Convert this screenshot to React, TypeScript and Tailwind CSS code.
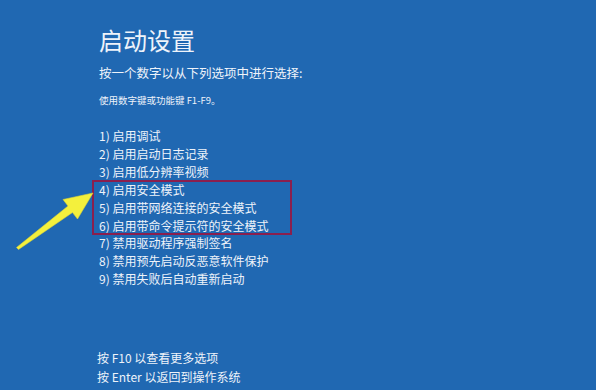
import React from "react";

const items = [
  "1) 启用调试",
  "2) 启用启动日志记录",
  "3) 启用低分辨率视频",
  "4) 启用安全模式",
  "5) 启用带网络连接的安全模式",
  "6) 启用带命令提示符的安全模式",
  "7) 禁用驱动程序强制签名",
  "8) 禁用预先启动反恶意软件保护",
  "9) 禁用失败后自动重新启动",
];

export default function App() {
  const font = { fontFamily: '"Noto Sans CJK SC", "Noto Sans", sans-serif' };
  return (
    <div
      className="relative w-[596px] h-[390px] overflow-hidden bg-[#2068b2] text-[#eef3fa] pl-[99px] pt-[26px] flex flex-col"
      style={font}
    >
      <div className="text-[24px] leading-[28px]">启动设置</div>
      <div className="mt-[10px] text-[12.5px] leading-[18px]">按一个数字以从下列选项中进行选择:</div>
      <div className="mt-[11px] text-[9.5px] leading-[14px]">使用数字键或功能键 F1-F9。</div>
      <div className="mt-[20px] text-[12px] leading-[17.9px] flex flex-col">
        {items.slice(0, 3).map((t) => (
          <div key={t}>{t}</div>
        ))}
        <div className="relative flex flex-col">
          <span className="absolute left-[-7px] top-[-1px] bottom-[-1px] w-[200px] border-2 border-[#8a1f4e]" />
          {items.slice(3, 6).map((t) => (
            <div key={t}>{t}</div>
          ))}
        </div>
        {items.slice(6).map((t) => (
          <div key={t}>{t}</div>
        ))}
      </div>
      <div className="mt-[60px] text-[12px] leading-[19px] flex flex-col -ml-[2px]">
        <div>按 F10 以查看更多选项</div>
        <div>按 Enter 以返回到操作系统</div>
      </div>
      <svg className="absolute left-0 top-0 pointer-events-none" width="596" height="390" viewBox="0 0 596 390">
        <polygon
          points="16.5,247.5 68,206 63,199.5 93,193 77.5,219 72.5,212.5 18.5,249.5"
          fill="#f4f03c"
          stroke="#d8d43a"
          strokeWidth="0.6"
          strokeLinejoin="round"
        />
      </svg>
    </div>
  );
}
